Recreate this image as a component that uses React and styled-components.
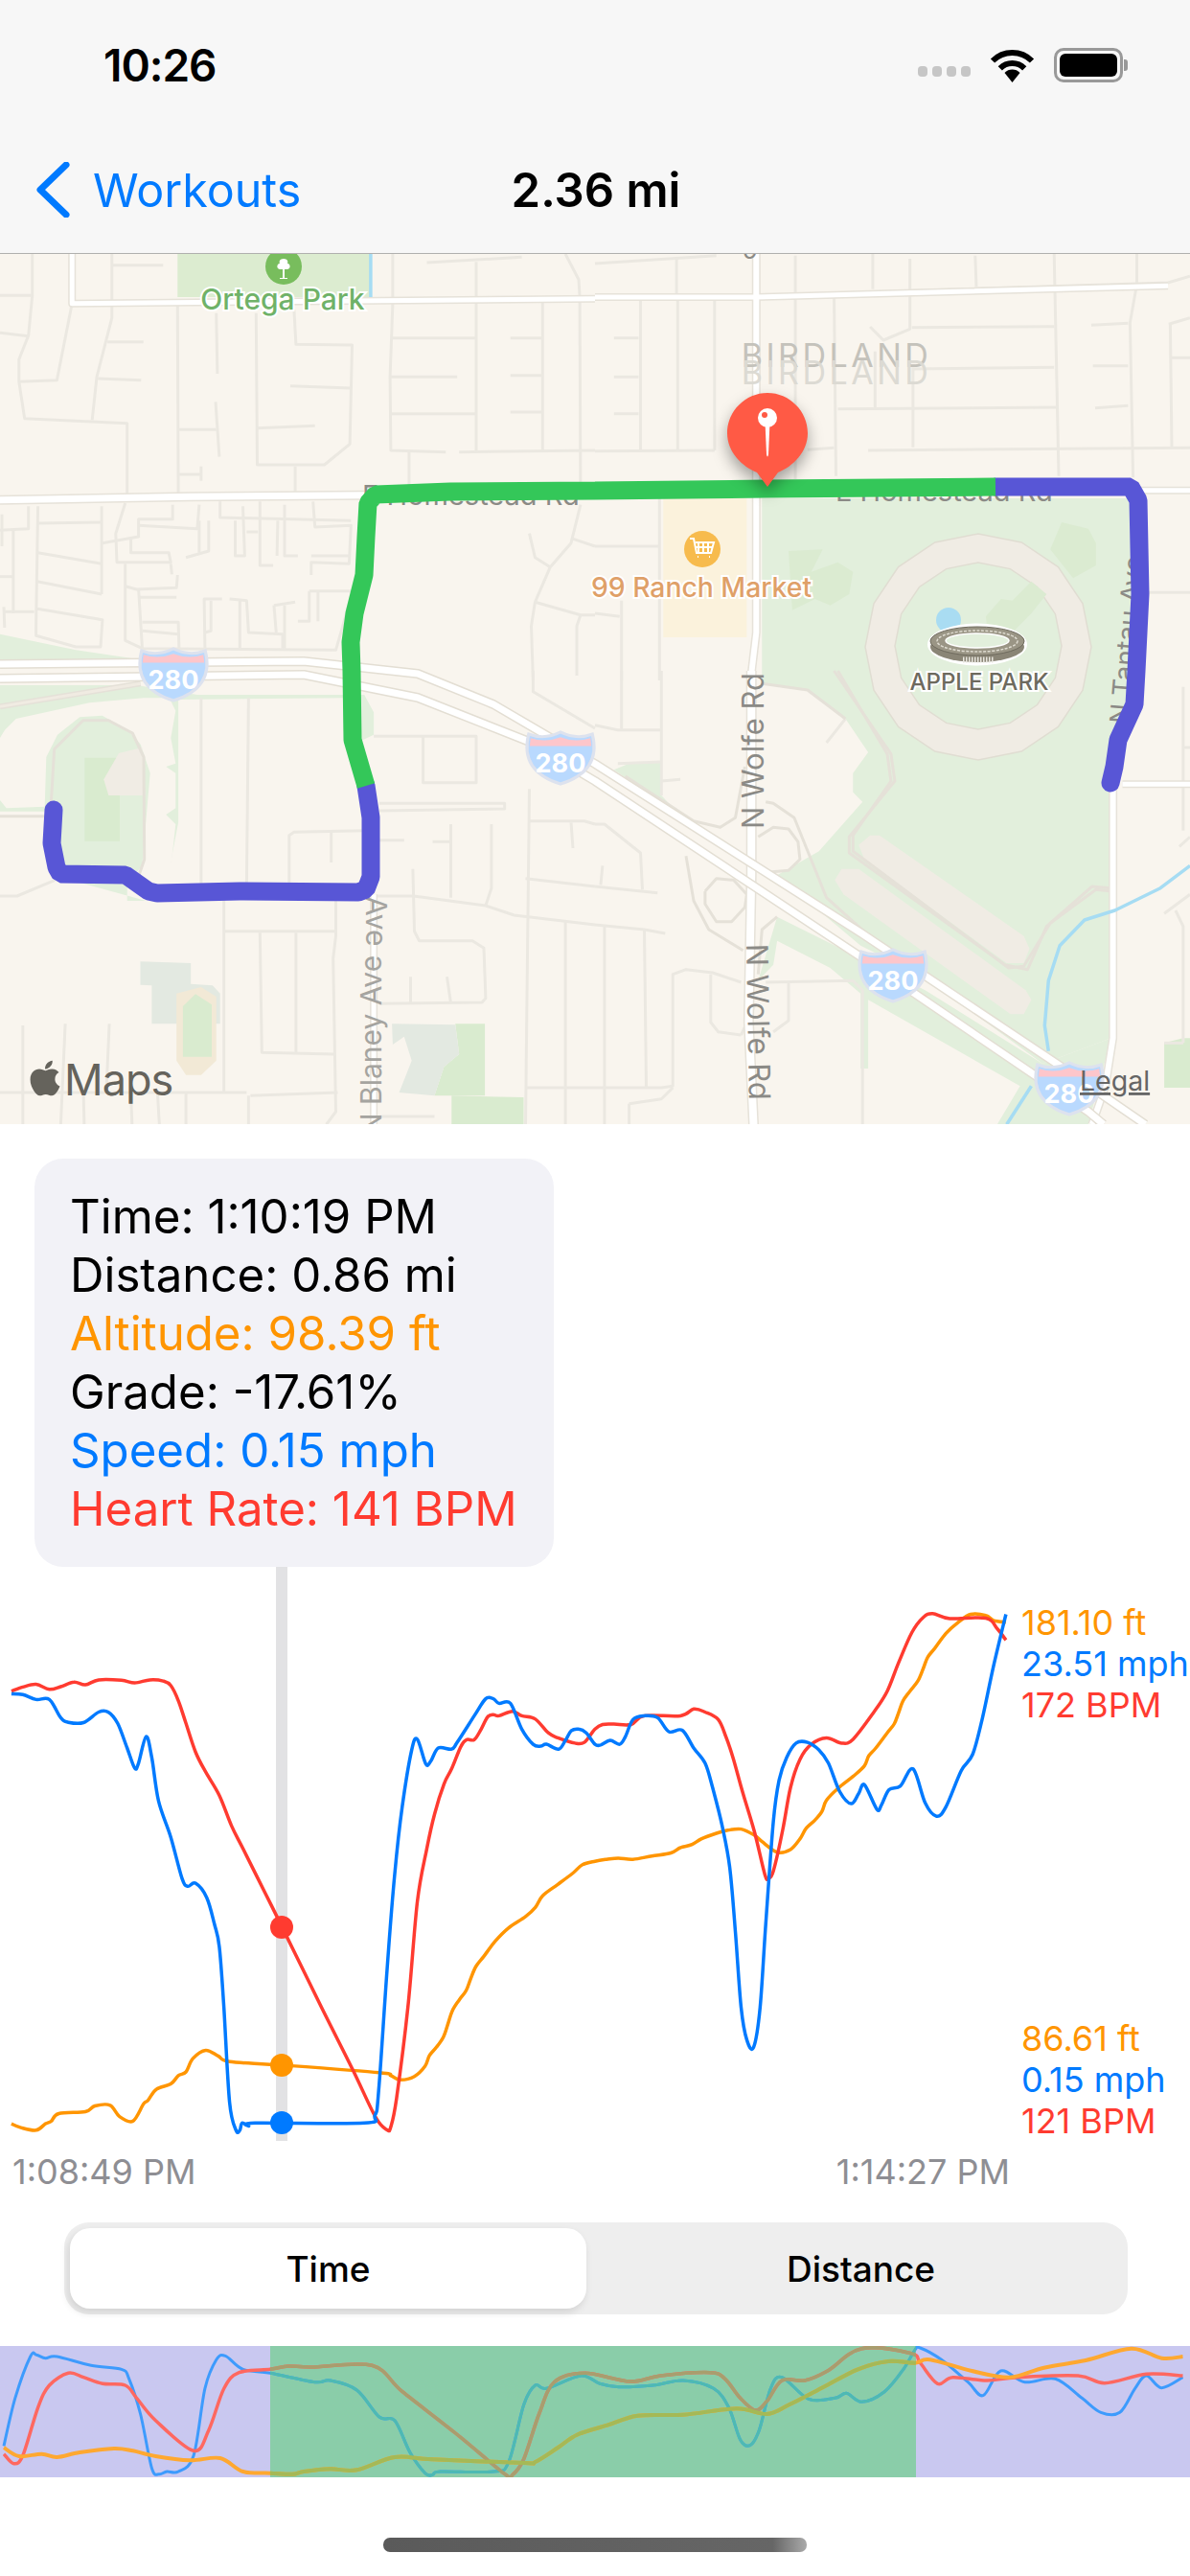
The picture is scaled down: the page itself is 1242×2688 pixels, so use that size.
import React from 'react'
import styled, { createGlobalStyle } from 'styled-components'
import { FaApple } from 'react-icons/fa'

const BLUE = '#007aff'
const RED = '#ff3b30'
const ORANGE = '#ff9500'
const UI_FONT = '"Inter", "Liberation Sans", sans-serif'

const GlobalStyle = createGlobalStyle`
  html, body {
    margin: 0;
    background: #fff;
  }
  body {
    font-family: ${UI_FONT};
  }
`

const Page = styled.div`
  width: 1242px;
  height: 2688px;
  overflow: hidden;
  background: #fff;
  display: flex;
  flex-direction: column;
`

const NavBar = styled.header`
  background: #f7f7f7;
  border-bottom: 1px solid #b0b0ae;
`

const StatusBar = styled.div`
  height: 132px;
  padding: 4px 70px 0 108px;
  box-sizing: border-box;
  display: flex;
  align-items: center;
  justify-content: space-between;
`

const Clock = styled.span`
  font-size: 46px;
  font-weight: 600;
  letter-spacing: -1px;
  color: #000;
`

const StatusIcons = styled.div`
  display: flex;
  align-items: center;
  gap: 20px;
`

const SignalDots = styled.div`
  display: flex;
  gap: 5px;
  align-self: flex-end;
  margin-bottom: 6px;
`

const SignalDot = styled.span`
  width: 10px;
  height: 11px;
  border-radius: 4px;
  background: #c6c6c6;
`

const Battery = styled.div`
  position: relative;
  width: 72px;
  height: 36px;
  box-sizing: border-box;
  border: 3px solid #999;
  border-radius: 10px;
  padding: 3px;
  &::after {
    content: '';
    position: absolute;
    right: -8px;
    top: 9px;
    width: 4px;
    height: 12px;
    border-radius: 0 3px 3px 0;
    background: #999;
  }
`

const BatteryFill = styled.div`
  height: 100%;
  border-radius: 6px;
  background: #000;
`

const TitleRow = styled.div`
  height: 132px;
  display: grid;
  grid-template-columns: 1fr auto 1fr;
  align-items: center;
`

const BackLink = styled.a`
  display: flex;
  align-items: center;
  gap: 24px;
  padding-left: 37px;
  color: ${BLUE};
  font-size: 48.4px;
`

const Title = styled.h1`
  margin: 0;
  padding-left: 2px;
  font-size: 49px;
  font-weight: 600;
  color: #000;
`

const MapSvg = styled.svg`
  display: block;
  width: 1242px;
  height: 908px;
  background: #f9f5ee;
`

const MapText = styled.text`
  font-family: ${UI_FONT};
  font-size: ${p => p.$size}px;
  font-weight: ${p => p.$weight || 400};
  fill: ${p => p.$color};
  text-anchor: ${p => p.$anchor || 'start'};
  letter-spacing: ${p => p.$spacing || 0}px;
  ${p => p.$halo && 'stroke: #fff; stroke-width: 4px; paint-order: stroke;'}
  ${p => p.$underline && 'text-decoration: underline;'}
`

const PinGroup = styled.g`
  filter: drop-shadow(0 8px 8px rgba(0, 0, 0, 0.35));
`

const Tooltip = styled.div`
  align-self: flex-start;
  margin: 36px 0 0 36px;
  padding: 30px 38px 30px 37px;
  border-radius: 30px;
  background: #f2f2f7;
`

const TooltipLine = styled.div`
  font-size: 49.2px;
  line-height: 61px;
  white-space: nowrap;
  color: ${p => p.$color || '#000'};
`

const ChartRow = styled.div`
  display: flex;
  height: 600px;
  gap: 8px;
`

const ChartSvg = styled.svg`
  display: block;
  flex: none;
  width: 1058px;
  height: 600px;
`

const ScaleColumn = styled.div`
  flex: 1;
  padding-top: 37px;
  display: flex;
  flex-direction: column;
  justify-content: space-between;
`

const ScaleLabel = styled.div`
  font-size: 36px;
  line-height: 43px;
  white-space: nowrap;
  color: ${p => p.$color};
`

const TimeAxis = styled.div`
  width: 1041px;
  margin: 10px 0 0 13px;
  display: flex;
  justify-content: space-between;
  font-size: 36px;
  line-height: 43px;
  color: #8e8e93;
`

const Segmented = styled.div`
  width: 1110px;
  height: 96px;
  box-sizing: border-box;
  margin: 31px 0 0 67px;
  padding: 6px;
  border-radius: 26px;
  background: #eeeeee;
  display: grid;
  grid-template-columns: 539px 1fr;
`

const Segment = styled.div`
  display: flex;
  align-items: center;
  justify-content: center;
  font-size: 37px;
  font-weight: 500;
  color: #000;
  border-radius: 21px;
  ${p => p.$active ? 'background: #fff; box-shadow: -2px 4px 8px rgba(0, 0, 0, 0.12);' : 'padding-left: 14px;'}
`

const MiniSvg = styled.svg`
  display: block;
  width: 1242px;
  height: 137px;
  margin-top: 33px;
`

const HomeIndicator = styled.div`
  width: 442px;
  height: 15px;
  margin: 63px 0 0 400px;
  border-radius: 7px;
  background: linear-gradient(90deg, #5a5a5a 0%, #666 92%, #aaa 100%);
`

// helpers: the points below were read off zoomed crops, so each crop gets its own scale
const tile = (ox, oy, sx = 2.525, sy = 3) => pts => pts.map(([x, y]) => [ox + x / sx, oy + y / sy])
const A = tile(0, 260)
const B = tile(621, 260)
const C = tile(0, 700)
const D = tile(621, 700)
const H = tile(0, 700, 3, 3)
const pointsAttr = pts => pts.map(p => p.map(n => n.toFixed(1)).join(',')).join(' ')

const smooth = pts => {
  let d = `M${pts[0][0].toFixed(1)} ${pts[0][1].toFixed(1)}`
  for (let i = 0; i < pts.length - 1; i++) {
    const p0 = pts[i - 1] || pts[i]
    const p1 = pts[i]
    const p2 = pts[i + 1]
    const p3 = pts[i + 2] || p2
    const c1 = [p1[0] + (p2[0] - p0[0]) / 6, p1[1] + (p2[1] - p0[1]) / 6]
    const c2 = [p2[0] - (p3[0] - p1[0]) / 6, p2[1] - (p3[1] - p1[1]) / 6]
    d += `C${c1[0].toFixed(1)} ${c1[1].toFixed(1)} ${c2[0].toFixed(1)} ${c2[1].toFixed(1)} ${p2[0].toFixed(1)} ${p2[1].toFixed(1)}`
  }
  return d
}

// the altitude trace climbs in small steps, so split the climb and nudge every other point
const ripple = (pts, from, to, step = 11, amp = 1.3) => {
  const out = []
  let flip = 1
  pts.forEach((p, i) => {
    const next = pts[i + 1]
    out.push(p)
    if (!next || p[0] < from || p[0] > to) return
    const n = Math.floor(Math.hypot(next[0] - p[0], next[1] - p[1]) / step)
    for (let k = 1; k < n; k++) {
      flip = -flip
      const t = k / n
      out.push([p[0] + (next[0] - p[0]) * t + amp * flip, p[1] + (next[1] - p[1]) * t + amp * flip])
    }
  })
  return out
}

const minorRoads = [
  ...[
    [[85, 15], [85, 145], [0, 145]],
    [[85, 145], [75, 270], [50, 345], [50, 415], [65, 530], [335, 545], [335, 765]],
    [[0, 262], [75, 272]],
    [[190, 170], [150, 410], [50, 415]],
    [[295, 15], [295, 215], [255, 400], [243, 535]],
    [[295, 50], [430, 50]],
    [[283, 290], [378, 290]],
    [[258, 405], [372, 410]],
    [[468, 175], [470, 765]],
    [[570, 200], [573, 390]],
    [[568, 478], [578, 650]],
    [[470, 565], [570, 565]],
    [[470, 705], [530, 705]],
    [[530, 680], [530, 725]],
    [[675, 200], [678, 675], [855, 675], [922, 610], [928, 300], [780, 298], [775, 190]],
    [[678, 560], [830, 553]],
    [[765, 428], [925, 435]],
    [[778, 680], [778, 765]],
    [[1035, 15], [1035, 170], [1028, 400], [1030, 630], [1175, 635]],
    [[1035, 278], [1255, 278]],
    [[1030, 400], [1205, 400]],
    [[1030, 515], [1255, 515]],
    [[1255, 40], [1255, 630]],
    [[1125, 42], [1375, 25]],
    [[1210, 635], [1568, 630]],
    [[1345, 278], [1430, 278]],
    [[1345, 395], [1430, 395]],
    [[1345, 510], [1430, 510]],
    [[1430, 165], [1430, 630]],
    [[1528, 165], [1530, 760]],
    [[1490, 15], [1525, 95], [1528, 150]],
    [[1078, 635], [1078, 740]],
    [[100, 805], [95, 1180], [95, 1210], [200, 1245], [265, 1245], [270, 1160], [95, 1125]],
    [[0, 880], [75, 875], [75, 805]],
    [[5, 830], [5, 930]],
    [[35, 880], [35, 1140]],
    [[10, 1135], [90, 1135]],
    [[10, 1120], [12, 1185]],
    [[0, 1025], [35, 1025]],
    [[100, 858], [265, 855]],
    [[268, 805], [268, 1080]],
    [[100, 950], [268, 985]],
    [[98, 1040], [268, 1080]],
    [[330, 795], [305, 890], [308, 980], [450, 980], [445, 950], [345, 950], [345, 900]],
    [[270, 920], [365, 900], [365, 845], [455, 845], [455, 800]],
    [[365, 865], [520, 875], [525, 800]],
    [[525, 850], [525, 950]],
    [[550, 850], [550, 945], [490, 965]],
    [[580, 790], [580, 840], [925, 850]],
    [[640, 805], [645, 960], [620, 960], [620, 850]],
    [[650, 885], [680, 885]],
    [[685, 790], [685, 990], [720, 990]],
    [[750, 800], [750, 960], [785, 960]],
    [[732, 850], [730, 960]],
    [[825, 790], [830, 870], [925, 865], [920, 985], [820, 980], [820, 1020]],
    [[820, 960], [920, 960]],
    [[330, 985], [330, 1225], [375, 1250], [885, 1255], [925, 1090]],
    [[330, 1055], [360, 1065], [465, 1060], [468, 1020]],
    [[450, 985], [453, 1018]],
    [[365, 1065], [375, 1250]],
    [[365, 1090], [465, 1090]],
    [[375, 1168], [470, 1168], [472, 1250]],
    [[375, 1195], [470, 1205]],
    [[540, 1250], [538, 1095], [585, 1095]],
    [[556, 1100], [556, 1195], [540, 1200]],
    [[605, 1095], [650, 1100], [655, 1200], [745, 1205], [745, 1250]],
    [[632, 1100], [632, 1250]],
    [[722, 1115], [778, 1105]],
    [[722, 1115], [728, 1200]],
    [[750, 1115], [750, 1250]],
    [[815, 1070], [925, 1070]],
    [[815, 1070], [815, 1165], [785, 1165]],
    [[838, 1070], [838, 1165]],
    [[1530, 800], [1505, 920], [1450, 995], [1410, 1105], [1400, 1180], [1405, 1350]],
    [[1395, 890], [1410, 965], [1450, 995]],
    [[1505, 905], [1568, 930]],
    [[1410, 1105], [1530, 1145], [1568, 1145]],
    [[1530, 1145], [1520, 1180], [1520, 1335]],
  ].map(A),
  ...[
    [[0, 45], [320, 20]],
    [[215, 30], [215, 140]],
    [[435, 145], [1510, 105], [1568, 85]],
    [[528, 20], [528, 720]],
    [[630, 140], [635, 710]],
    [[732, 15], [732, 125]],
    [[830, 30], [830, 250], [760, 285], [725, 243]],
    [[1002, 20], [1005, 118]],
    [[1210, 15], [1222, 710]],
    [[1428, 15], [1428, 110], [1410, 230], [1418, 715]],
    [[835, 245], [1210, 242]],
    [[1308, 238], [1405, 232]],
    [[1512, 235], [1568, 215]],
    [[1516, 235], [1520, 620]],
    [[1520, 340], [1568, 340]],
    [[1312, 365], [1405, 365]],
    [[1318, 497], [1405, 490]],
    [[640, 500], [1220, 495]],
    [[840, 375], [1210, 370]],
    [[838, 370], [838, 620]],
    [[738, 320], [738, 495]],
    [[720, 630], [1568, 622]],
    [[120, 160], [120, 630]],
    [[218, 160], [218, 630]],
    [[315, 160], [315, 630]],
    [[50, 278], [115, 278]],
    [[50, 400], [115, 400]],
    [[50, 515], [115, 515]],
    [[0, 632], [315, 630]],
    [[560, 628], [630, 622]],
    [[0, 930], [170, 930]],
    [[170, 780], [170, 1350]],
    [[70, 1100], [70, 1350]],
    [[0, 1140], [65, 1150]],
    [[1450, 1075], [1568, 1075]],
  ].map(B),
  ...[
    [[530, 85], [530, 670]],
    [[655, 85], [650, 670]],
    [[985, 205], [1255, 205], [1255, 350], [1115, 350], [1115, 205]],
    [[1000, 415], [1330, 415], [1330, 432], [1000, 438]],
    [[762, 670], [762, 515], [775, 505], [960, 500]],
    [[873, 500], [873, 600]],
    [[960, 530], [1065, 530]],
    [[1140, 535], [1190, 535]],
    [[1188, 480], [1188, 710]],
    [[1295, 480], [1295, 680], [1280, 735]],
    [[1395, 370], [1385, 1420]],
    [[1405, 0], [1405, 65], [1568, 180]],
    [[1395, 470], [1540, 470], [1568, 480]],
    [[1505, 475], [1510, 555]],
    [[1385, 650], [1568, 675]],
    [[990, 705], [1090, 705], [1280, 735], [1355, 765], [1568, 795]],
    [[1490, 785], [1490, 1420]],
    [[1088, 620], [1092, 815], [1105, 845], [1245, 845], [1275, 868], [1280, 1025], [1270, 1038], [1000, 1042]],
    [[1082, 958], [1082, 1040]],
    [[1178, 958], [1188, 1040]],
    [[590, 700], [590, 1320]],
    [[590, 815], [885, 815]],
    [[885, 720], [885, 830], [878, 900], [885, 1380], [860, 1420]],
    [[685, 820], [690, 1195], [880, 1200]],
    [[780, 820], [780, 1195]],
    [[0, 705], [45, 705], [145, 655]],
    [[0, 1320], [650, 1320]],
    [[660, 1330], [890, 1320]],
    [[655, 1330], [655, 1420]],
    [[60, 1110], [60, 1420]],
    [[172, 1105], [160, 1420]],
    [[288, 1105], [280, 1320]],
    [[220, 1320], [222, 1420]],
    [[345, 1320], [348, 1420]],
    [[415, 1320], [420, 1420]],
    [[490, 1320], [490, 1420]],
    [[1385, 1305], [1568, 1305]],
    [[1000, 1395], [1145, 1395]],
  ].map(C),
  ...[
    [[70, 0], [70, 185]],
    [[0, 170], [60, 185], [175, 185]],
    [[175, 0], [175, 390]],
    [[60, 290], [175, 285]],
    [[175, 345], [225, 340]],
    [[660, 150], [610, 225]],
    [[0, 480], [25, 480], [120, 570], [125, 685]],
    [[0, 675], [165, 695]],
    [[20, 610], [15, 670]],
    [[0, 795], [130, 810], [185, 822]],
    [[25, 800], [25, 1420]],
    [[130, 810], [135, 1305]],
    [[0, 1305], [175, 1305], [205, 1300], [205, 950], [240, 935], [310, 945], [385, 975]],
    [[305, 950], [305, 1100], [325, 1130], [385, 1140]],
    [[90, 1355], [175, 1340], [205, 1305]],
    [[90, 1355], [90, 1420]],
    [[450, 975], [680, 970], [705, 1000], [705, 1420]],
    [[510, 975], [510, 1095], [470, 1130]],
    [[385, 1140], [420, 1050]],
    [[1550, 50], [1550, 500]],
    [[1550, 240], [1568, 240]],
    [[1568, 520], [1540, 550]],
    [[1500, 760], [1568, 700]],
    [[1530, 750], [1550, 800], [1550, 1165]],
    [[1500, 1165], [1550, 1165]],
  ].map(D),
]

// ramps and the thin service roads around the freeway
const ramps = [
  ...[
    [[450, 410], [470, 415], [525, 460], [610, 710], [760, 870]],
    [[430, 520], [470, 490], [510, 495], [535, 535], [540, 590], [510, 625], [460, 630], [430, 610]],
    [[290, 690], [320, 650], [365, 655], [400, 700], [395, 740], [360, 785], [320, 785], [290, 730], [290, 690]],
    [[240, 580], [260, 720], [300, 810], [390, 875]],
    [[395, 300], [370, 460], [330, 490], [260, 470], [80, 330]],
    [[480, 770], [440, 810], [430, 950]],
    [[440, 40], [560, 60], [660, 150]],
    [[630, 0], [780, 260], [790, 345], [670, 520], [670, 570], [1080, 920], [1140, 935], [1190, 800], [1310, 675], [1360, 680]],
    [[640, 0], [770, 260], [780, 345], [680, 515], [680, 565], [1090, 930], [1130, 925], [1200, 790], [1320, 685], [1360, 690]],
  ].map(D),
  ...[
    [[160, 415], [170, 245], [260, 155], [340, 155], [415, 195], [450, 270], [452, 590], [435, 640]],
    [[0, 455], [140, 455]],
  ].map(H),
]

const greens = [
  { fill: '#dcecd0', pts: A([[468, 15], [975, 15], [975, 150], [468, 150]]) },
  { fill: '#e2efdc', pts: A([[0, 1205], [200, 1255], [370, 1285], [0, 1290]]) },
  { fill: '#e2efdc', pts: C([[0, 45], [360, 45], [520, 75], [960, 75], [985, 130], [985, 200], [950, 220], [910, 85], [470, 90], [470, 475], [440, 660], [335, 660], [335, 720], [385, 720], [140, 640], [120, 440], [0, 440]]) },
  // the cream ground that wraps around the sports field
  { fill: '#f9f5ee', pts: H([[0, 210], [15, 185], [50, 150], [280, 100], [450, 85], [530, 85], [550, 125], [535, 210], [550, 290], [520, 300], [550, 320], [550, 430], [520, 450], [550, 480], [530, 660], [400, 665], [445, 610], [470, 320], [440, 230], [400, 185], [320, 140], [250, 145], [180, 200], [145, 270], [140, 425], [20, 430], [0, 405]]) },
  { fill: '#d9ebcf', pts: H([[265, 272], [375, 272], [375, 533], [265, 533]]) },
  { fill: '#f0ece4', pts: H([[372, 258], [445, 240], [455, 390], [340, 390], [325, 340]]) },
  { fill: '#e3e9e1', pts: C([[370, 910], [503, 915], [503, 980], [560, 985], [580, 1010], [580, 1105], [400, 1105], [400, 985], [370, 983]]) },
  { fill: '#f2e9d6', pts: C([[465, 1010], [530, 990], [570, 1020], [570, 1220], [530, 1265], [490, 1265], [465, 1220]]) },
  { fill: '#d9ebcf', pts: C([[482, 1050], [515, 1012], [558, 1045], [558, 1208], [482, 1208]]) },
  { fill: '#d9ebcf', pts: C([[1200, 1105], [1278, 1105], [1278, 1330], [1145, 1330], [1170, 1240], [1210, 1200]]) },
  { fill: '#e3e9e1', pts: C([[1033, 1105], [1200, 1108], [1210, 1200], [1170, 1240], [1145, 1330], [1052, 1320], [1085, 1220], [1065, 1145], [1035, 1170]]) },
  { fill: '#d9ebcf', pts: C([[1190, 1330], [1380, 1335], [1380, 1420], [1190, 1420]]) },
  { fill: '#fbf2dc', pts: B([[180, 780], [400, 780], [400, 1215], [180, 1215]]) },
  // apple park
  {
    fill: '#e2efdc',
    pts: [
      ...B([[440, 780], [1420, 780], [1420, 1350]]),
      ...D([[1360, 300], [1360, 1150], [1180, 1230], [870, 960], [700, 860], [480, 640], [590, 565], [705, 410], [680, 380], [680, 320], [720, 255], [660, 150], [560, 60], [440, 40]]),
    ],
  },
  { fill: '#e2efdc', pts: D([[480, 845], [620, 930], [700, 1010], [700, 1245], [720, 1245], [720, 1030], [1120, 1300], [1060, 1420], [1300, 1420], [1360, 1150], [1180, 1230], [870, 1000], [700, 900], [480, 770], [430, 970], [470, 920]]) },
  { fill: '#e2efdc', pts: D([[50, 310], [100, 285], [175, 285], [175, 390], [230, 460], [100, 350]]) },
  { fill: '#d9ebcf', pts: D([[1500, 1165], [1550, 1150], [1568, 1150], [1568, 1305], [1500, 1305]]) },
  { fill: '#dbebd1', pts: B([[1230, 855], [1300, 875], [1320, 920], [1320, 990], [1260, 1030], [1200, 940]]) },
  { fill: '#dbebd1', pts: B([[510, 945], [600, 940], [570, 1010], [640, 980], [680, 1010], [670, 1080], [620, 1115], [580, 1095], [520, 1130]]) },
]

const buildings = [
  D([[725, 515], [750, 515], [1130, 830], [1145, 870], [1130, 915], [1085, 915], [710, 590], [695, 545]]),
  D([[650, 620], [695, 620], [1135, 1000], [1150, 1030], [1130, 1075], [1095, 1075], [655, 700], [632, 655]]),
]

const ring = (cx, cy, r, sides = 16) =>
  Array.from({ length: sides }, (_, i) => {
    const a = (i / sides) * Math.PI * 2 + Math.PI / 2
    return [cx + r * Math.cos(a), cy + r * Math.sin(a)]
  })

// white streets with a tan casing: [points, white width]
const streets = [
  [A([[190, 15], [190, 170], [1568, 155]]), 5],
  [A([[0, 785], [500, 775], [960, 770]]), 7],
  [B([[0, 150], [425, 150], [1510, 115]]), 5],
  [B([[425, 15], [425, 1200], [410, 1350]]), 6],
  [D([[412, 0], [412, 640], [405, 1100], [418, 1420]]), 8],
  [B([[1430, 755], [1568, 755]]), 5],
  [D([[1365, 360], [1365, 1150], [1345, 1300], [1310, 1420]]), 6],
  [D([[1390, 355], [1568, 355]]), 5],
  [C([[985, 700], [985, 1420]]), 5],
]

const freeways = [
  [[0, 693], [317, 690], [436, 703], [515, 735], [621, 797], ...D([[700, 820], [1230, 1240], [1450, 1420]])],
  [[0, 708], [317, 704], [436, 728], [550, 773], [621, 815], ...D([[700, 895], [1300, 1380], [1340, 1420]])],
]

const routeBlueRight = [[1039, 508], [1180, 508], [1188, 522], [1190, 620], [1186, 700], [1184, 735], [1167, 772], [1163, 800], [1159, 817]]
const routeGreen = [[1039, 508], [800, 510], [621, 512], [470, 513], [392, 516], [384, 525], [382, 560], [380, 600], [370, 640], [366, 670], [367, 700], [368, 772], [382, 820]]
const routeBlueLeft = [[382, 820], [387, 853], [387, 915], [382, 928], [374, 931], [250, 930], [164, 932], [155, 930], [131, 913], [63, 912], [59, 905], [54, 880], [56, 845]]

const Shield = ({ x, y }) => (
  <g transform={`translate(${x} ${y}) scale(1.04)`}>
    <path d="M-32,-24 Q-16,-18 0,-26 Q16,-18 32,-24 C37,-4 32,16 0,26 C-32,16 -37,-4 -32,-24Z" fill="#b9d9fe" stroke="#dde2ee" strokeWidth="3" />
    <path d="M-30,-20 Q-15,-15 0,-21 Q15,-15 30,-20 L31,-12 L-31,-12Z" fill="#fdc6cb" />
    <MapText x="0" y="14" $size={26} $weight={700} $color="#fff" $anchor="middle">280</MapText>
  </g>
)

const AppleParkMark = () => (
  <g>
    <circle cx="990" cy="647" r="13" fill="#a9dcf2" />
    <ellipse cx="1020" cy="672.5" rx="52" ry="22" fill="#fff" />
    <ellipse cx="1020" cy="675" rx="49" ry="16" fill="#8a8576" />
    <ellipse cx="1020" cy="669" rx="49" ry="15" fill="#9a9585" stroke="#6f6b5e" strokeWidth="1" />
    <ellipse cx="1020" cy="669" rx="42" ry="11" fill="none" stroke="#dedbd0" strokeWidth="1.5" strokeDasharray="3 1.5" />
    <ellipse cx="1020" cy="668.5" rx="33" ry="7.5" fill="#e2efdc" stroke="#fff" strokeWidth="1.5" />
    <path d="M1005 688.5H1037" stroke="#e8e6de" strokeWidth="6" strokeDasharray="1.5 1.5" />
  </g>
)

const WorkoutMap = () => (
  <MapSvg viewBox="0 265 1242 908">
    {greens.map((g, i) => <polygon key={i} points={pointsAttr(g.pts)} fill={g.fill} />)}
    <polygon points={pointsAttr(ring(1021, 675, 118))} fill="#f0ece4" stroke="#e0ddd2" strokeWidth="1.5" />
    <polygon points={pointsAttr(ring(1021, 674, 87))} fill="#e2efdc" stroke="#e0ddd2" strokeWidth="1.5" />
    <polygon points={pointsAttr(B([[1030, 1150], [1070, 1095], [1100, 1100], [1150, 1040], [1190, 1080], [1150, 1140], [1100, 1200], [1035, 1200]]))} fill="#dbebd1" />
    {buildings.map((b, i) => <polygon key={i} points={pointsAttr(b)} fill="#f0ece4" />)}

    <g fill="none" stroke="#ebe8e1" strokeWidth="3" strokeLinejoin="round">
      {minorRoads.map((r, i) => <polyline key={i} points={pointsAttr(r)} />)}
    </g>
    <g fill="none" stroke="#e5e1d8" strokeWidth="3" strokeLinejoin="round">
      {ramps.map((r, i) => <polyline key={i} points={pointsAttr(r)} />)}
      <polyline points={pointsAttr(H([[0, 112], [440, 40]]))} strokeWidth="6" />
      <polyline points={pointsAttr(H([[0, 112], [440, 40]]))} stroke="#f0ebe2" strokeWidth="3" />
    </g>
    <g fill="none" strokeLinejoin="round">
      {streets.map(([r, w], i) => <polyline key={i} points={pointsAttr(r)} stroke="#e6e2d9" strokeWidth={w + 3} />)}
      {streets.map(([r, w], i) => <polyline key={i} points={pointsAttr(r)} stroke="#fff" strokeWidth={w} />)}
      {freeways.map((r, i) => <polyline key={i} points={pointsAttr(r)} stroke="#e3ded3" strokeWidth="10" />)}
      {freeways.map((r, i) => <polyline key={i} points={pointsAttr(r)} stroke="#fff" strokeWidth="7" />)}
    </g>
    <g fill="none" stroke="#a6dcf3" strokeWidth="3.5" strokeLinejoin="round">
      <polyline points={pointsAttr(A([[977, 15], [977, 150]]))} />
      <polyline points={pointsAttr(D([[1568, 610], [1490, 680], [1370, 750], [1290, 780], [1225, 860], [1195, 970], [1185, 1110], [1195, 1190]]))} />
      <polyline points={pointsAttr(D([[1150, 1300], [1085, 1420]]))} />
    </g>

    <ellipse cx="296" cy="278" rx="19" ry="19" fill="#78bd5d" />
    <path d="M296 270c-4 0-5 3-4 5-3 0-4 5 0 6h3v9h-3v1h8v-1h-3v-9h3c4-1 3-6 0-6 1-2 0-5-4-5z" fill="#fff" />
    <MapText x="295" y="323" $size={30} $weight={500} $color="#6fb268" $anchor="middle" $halo>Ortega Park</MapText>

    <MapText x="873" y="383" $size={34} $color="#c4c2bb" $anchor="middle" $spacing={3.5}>BIRDLAND</MapText>
    <MapText x="873" y="401" $size={34} $color="#dcdad3" $anchor="middle" $spacing={3.5}>BIRDLAND</MapText>
    <MapText x="378" y="527" $size={29} $color="#8b8a86">E Homestead Rd</MapText>
    <MapText x="872" y="523" $size={29} $color="#8b8a86">E Homestead Rd</MapText>

    <circle cx="733" cy="573" r="19" fill="#f7bb4d" />
    <path d="M720 562h4l3 15h15l3-11h-19M728 581h1M740 581h1M729 566v10M734 566v10M739 566v10M726 571h17" fill="none" stroke="#fff" strokeWidth="2" />
    <MapText x="732" y="623" $size={28.3} $weight={500} $color="#dfa068" $anchor="middle" $halo>99 Ranch Market</MapText>

    <AppleParkMark />
    <MapText x="1022" y="720" $size={24} $weight={500} $color="#6d6a5e" $anchor="middle" $halo>APPLE PARK</MapText>

    <MapText transform="translate(797 865) rotate(-90)" $size={31} $color="#8b8a86">N Wolfe Rd</MapText>
    <MapText transform="translate(779 985) rotate(89)" $size={31} $color="#8b8a86">N Wolfe Rd</MapText>
    <MapText transform="translate(398 1184) rotate(-90)" $size={30} $color="#a5a4a0">N Blaney Ave</MapText>
    <MapText transform="translate(382 935) rotate(90)" $size={30} $color="#a5a4a0">Ave</MapText>
    <MapText transform="translate(1178 756) rotate(-85)" $size={28} $color="#8b8a86">N Tantau Ave</MapText>
    <MapText x="775" y="270" $size={26} $color="#8b8a86">9</MapText>

    <Shield x={181} y={704} />
    <Shield x={585} y={791} />
    <Shield x={932} y={1018} />
    <Shield x={1116} y={1136} />

    <g fill="none" strokeWidth="19">
      <polyline points={pointsAttr(routeBlueRight)} stroke="#5856d6" strokeLinecap="round" strokeLinejoin="bevel" />
      <polyline points={pointsAttr(routeBlueLeft)} stroke="#5856d6" strokeLinecap="round" strokeLinejoin="bevel" />
      <polyline points={pointsAttr(routeGreen)} stroke="#34c759" strokeLinejoin="bevel" />
    </g>

    <PinGroup>
      <path d="M801 410C778 410 759 429 759 452C759 472 775 487 790 493L801 508L812 493C827 487 843 472 843 452C843 429 824 410 801 410Z" fill="#ff5a45" />
      <circle cx="801" cy="436" r="10" fill="#fff" />
      <circle cx="798" cy="433" r="3" fill="#ff5a45" />
      <path d="M798.5 440H803.5L802 474Q801 479 800 474Z" fill="#fff" />
    </PinGroup>

    <FaApple x="26" y="1104" size={42} color="#65635c" />
    <MapText x="67" y="1143" $size={45} $color="#65635c" $spacing={-1}>Maps</MapText>
    <MapText x="1127" y="1138" $size={28.5} $color="#666" $underline>Legal</MapText>
  </MapSvg>
)

const E = tile(0, 1660, 2.525, 2.53)
const F = tile(621, 1660, 2.525, 2.53)

const heartLine = [
  ...E([[30, 265], [60, 254], [95, 247], [130, 260], [160, 253], [195, 241], [225, 248], [260, 235], [320, 236], [355, 243], [395, 235], [430, 238], [450, 250], [470, 290], [490, 350], [515, 425], [540, 475], [578, 540], [610, 620], [640, 680], [700, 800], [743, 887], [850, 1105], [930, 1265], [990, 1390], [1020, 1423], [1030, 1415], [1045, 1340], [1075, 1100], [1100, 820], [1125, 680], [1145, 590], [1170, 510], [1190, 470], [1215, 410], [1230, 393], [1250, 393], [1268, 365], [1285, 333], [1300, 327], [1315, 330], [1350, 318], [1375, 330], [1410, 338], [1445, 375], [1470, 388], [1515, 402], [1540, 400]]),
  ...F([[0, 365], [20, 353], [50, 352], [95, 353], [130, 330], [225, 330], [260, 312], [290, 320], [325, 340], [345, 385], [365, 445], [390, 535], [420, 635], [448, 750], [458, 758], [470, 740], [495, 630], [515, 520], [540, 445], [570, 405], [610, 388], [650, 402], [680, 392], [735, 320], [770, 265], [800, 190], [835, 110], [865, 70], [890, 60], [935, 73], [1030, 72], [1060, 100], [1083, 130]]),
]

const speedLine = [
  ...E([[30, 272], [60, 274], [95, 287], [130, 287], [160, 335], [180, 347], [220, 348], [260, 320], [285, 320], [310, 350], [335, 415], [355, 468], [365, 455], [385, 385], [400, 440], [418, 555], [450, 650], [480, 760], [495, 780], [515, 772], [545, 810], [565, 880], [578, 940], [590, 1100], [605, 1350], [622, 1424], [632, 1424], [638, 1405], [655, 1413], [672, 1405], [960, 1405], [988, 1385], [998, 1320], [1020, 1000], [1040, 750], [1060, 570], [1085, 420], [1100, 392], [1122, 457], [1135, 450], [1155, 415], [1190, 418], [1205, 400], [1250, 330], [1280, 285], [1300, 285], [1315, 297], [1345, 297], [1375, 365], [1405, 405], [1425, 410], [1440, 405], [1472, 418], [1490, 395], [1505, 370], [1525, 365], [1545, 375]]),
  ...F([[0, 405], [15, 407], [40, 395], [65, 405], [80, 385], [100, 340], [130, 330], [165, 335], [195, 372], [230, 368], [260, 415], [290, 455], [310, 520], [335, 620], [355, 730], [370, 900], [385, 1100], [400, 1185], [418, 1205], [435, 1100], [450, 880], [470, 610], [485, 500], [505, 440], [530, 402], [560, 400], [590, 420], [615, 455], [645, 530], [675, 562], [695, 535], [710, 512], [743, 577], [755, 565], [775, 525], [805, 515], [838, 470], [870, 560], [900, 595], [925, 570], [965, 475], [995, 432], [1020, 340], [1050, 200], [1083, 62]]),
]

const altitudeLine = ripple([
  ...E([[30, 1407], [55, 1417], [95, 1424], [120, 1407], [135, 1400], [155, 1380], [225, 1375], [250, 1360], [290, 1358], [315, 1388], [350, 1400], [378, 1355], [390, 1345], [412, 1316], [450, 1302], [470, 1280], [490, 1270], [508, 1235], [542, 1213], [575, 1228], [605, 1243], [743, 1252], [1000, 1272], [1030, 1280], [1055, 1291], [1092, 1282], [1120, 1255], [1150, 1205], [1180, 1145], [1210, 1080], [1240, 1025], [1275, 965], [1305, 925], [1340, 890], [1385, 860], [1430, 805], [1470, 775], [1510, 745], [1535, 723]]),
  ...F([[0, 714], [30, 709], [100, 709], [150, 700], [200, 692], [225, 678], [280, 655], [320, 640], [350, 632], [385, 629], [420, 645], [440, 662], [480, 690], [515, 683], [540, 655], [580, 605], [610, 553], [640, 522], [680, 490], [710, 462], [740, 415], [770, 375], [800, 322], [830, 265], [865, 205], [895, 152], [925, 112], [955, 85], [990, 62], [1030, 65], [1050, 78], [1083, 83]]),
], 440, 1000)

const MainChart = () => (
  <ChartSvg viewBox="0 1635 1058 600">
    <rect x="288" y="1635" width="12" height="599" fill="#e2e2e4" />
    <g fill="none" strokeWidth="3.5">
      <path d={smooth(altitudeLine)} stroke={ORANGE} />
      <path d={smooth(heartLine)} stroke={RED} />
      <path d={smooth(speedLine)} stroke={BLUE} />
    </g>
    <circle cx="294" cy="2011" r="12" fill={RED} />
    <circle cx="294" cy="2155" r="12" fill={ORANGE} />
    <circle cx="294" cy="2215" r="12" fill={BLUE} />
  </ChartSvg>
)

const G = tile(0, 2260, 1.262, 3)

const miniSpeed = G([[5, 880], [20, 730], [40, 600], [48, 595], [60, 605], [75, 600], [120, 628], [160, 640], [170, 670], [185, 780], [200, 950], [210, 968], [220, 960], [235, 960], [255, 910], [270, 700], [285, 610], [297, 598], [320, 640], [356, 652], [415, 680], [435, 675], [470, 705], [500, 790], [520, 800], [540, 900], [560, 965], [570, 970], [580, 960], [650, 960], [670, 930], [690, 750], [705, 690], [720, 700], [765, 660], [790, 685], [815, 695], [860, 690], [900, 675], [940, 700], [960, 760], [975, 860], [988, 878], [1000, 830], [1015, 700], [1030, 665], [1065, 733], [1100, 730], [1115, 715], [1135, 742], [1165, 710], [1190, 640], [1205, 580], [1212, 573], [1240, 610], [1275, 680], [1295, 722], [1318, 645], [1350, 680], [1390, 670], [1425, 730], [1450, 775], [1475, 775], [1495, 700], [1510, 660], [1530, 698], [1558, 665]])
const miniHeart = G([[5, 905], [18, 935], [30, 910], [50, 760], [65, 690], [90, 652], [110, 665], [135, 685], [165, 690], [180, 730], [205, 800], [255, 895], [275, 830], [295, 700], [315, 650], [356, 640], [380, 630], [410, 633], [490, 628], [530, 710], [600, 840], [665, 968], [675, 970], [690, 920], [710, 780], [730, 680], [770, 652], [830, 678], [870, 660], [935, 650], [955, 670], [975, 730], [995, 768], [1010, 740], [1030, 675], [1060, 675], [1090, 645], [1135, 575], [1200, 590], [1212, 620], [1235, 685], [1255, 665], [1300, 675], [1340, 665], [1420, 660], [1455, 683], [1510, 655], [1558, 660]])
const miniAltitude = G([[5, 885], [25, 912], [55, 905], [75, 915], [105, 900], [150, 888], [175, 895], [205, 912], [250, 925], [290, 918], [320, 960], [356, 965], [385, 968], [400, 960], [435, 952], [470, 955], [520, 915], [570, 922], [690, 933], [705, 930], [735, 885], [760, 845], [800, 815], [840, 785], [900, 782], [970, 763], [1010, 780], [1040, 750], [1085, 695], [1130, 640], [1170, 615], [1205, 620], [1225, 610], [1280, 645], [1330, 665], [1375, 635], [1430, 612], [1490, 575], [1530, 605], [1558, 600]])

const MiniChart = () => (
  <MiniSvg viewBox="0 2449 1242 137">
    <defs>
      <clipPath id="selected-range"><rect x="282" y="2449" width="674" height="137" /></clipPath>
    </defs>
    <rect x="0" y="2449" width="1242" height="137" fill="#c9c8f0" />
    <rect x="282" y="2449" width="674" height="137" fill="#8acda9" />
    <g fill="none">
      <path d={smooth(miniSpeed)} stroke="#3d9bfd" strokeWidth="3" />
      <path d={smooth(miniHeart)} stroke="#ff6860" strokeWidth="3.5" />
      <path d={smooth(miniAltitude)} stroke="#ffa830" strokeWidth="4" />
      <g clipPath="url(#selected-range)">
        <path d={smooth(miniSpeed)} stroke="#4ebab2" strokeWidth="3" />
        <path d={smooth(miniHeart)} stroke="#a89e6e" strokeWidth="3.5" />
        <path d={smooth(miniAltitude)} stroke="#a5b956" strokeWidth="4" />
      </g>
    </g>
  </MiniSvg>
)

const WifiIcon = () => (
  <svg width="47" height="35" viewBox="0 0 47 35">
    <g fill="none" stroke="#000" strokeWidth="6">
      <path d="M3 12.5A29 29 0 0 1 44 12.5" />
      <path d="M10.8 20.3A18 18 0 0 1 36.2 20.3" />
    </g>
    <path d="M23.5 35L15.5 25A11 11 0 0 1 31.5 25Z" fill="#000" />
  </svg>
)

const tooltipLines = [
  { text: 'Time: 1:10:19 PM' },
  { text: 'Distance: 0.86 mi' },
  { text: 'Altitude: 98.39 ft', color: ORANGE },
  { text: 'Grade: -17.61%' },
  { text: 'Speed: 0.15 mph', color: BLUE },
  { text: 'Heart Rate: 141 BPM', color: RED },
]

const App = () => (
  <Page>
    <GlobalStyle />
    <NavBar>
      <StatusBar>
        <Clock>10:26</Clock>
        <StatusIcons>
          <SignalDots>
            <SignalDot /><SignalDot /><SignalDot /><SignalDot />
          </SignalDots>
          <WifiIcon />
          <Battery><BatteryFill /></Battery>
        </StatusIcons>
      </StatusBar>
      <TitleRow>
        <BackLink>
          <svg width="36" height="58" viewBox="0 0 36 58">
            <path d="M32 3L5 29L32 55" fill="none" stroke={BLUE} strokeWidth="7" strokeLinecap="round" strokeLinejoin="round" />
          </svg>
          Workouts
        </BackLink>
        <Title>2.36 mi</Title>
      </TitleRow>
    </NavBar>

    <WorkoutMap />

    <Tooltip>
      {tooltipLines.map(l => <TooltipLine key={l.text} $color={l.color}>{l.text}</TooltipLine>)}
    </Tooltip>

    <ChartRow>
      <MainChart />
      <ScaleColumn>
        <div>
          <ScaleLabel $color={ORANGE}>181.10 ft</ScaleLabel>
          <ScaleLabel $color={BLUE}>23.51 mph</ScaleLabel>
          <ScaleLabel $color={RED}>172 BPM</ScaleLabel>
        </div>
        <div>
          <ScaleLabel $color={ORANGE}>86.61 ft</ScaleLabel>
          <ScaleLabel $color={BLUE}>0.15 mph</ScaleLabel>
          <ScaleLabel $color={RED}>121 BPM</ScaleLabel>
        </div>
      </ScaleColumn>
    </ChartRow>

    <TimeAxis>
      <span>1:08:49 PM</span>
      <span>1:14:27 PM</span>
    </TimeAxis>

    <Segmented>
      <Segment $active>Time</Segment>
      <Segment>Distance</Segment>
    </Segmented>

    <MiniChart />
    <HomeIndicator />
  </Page>
)

export default App
